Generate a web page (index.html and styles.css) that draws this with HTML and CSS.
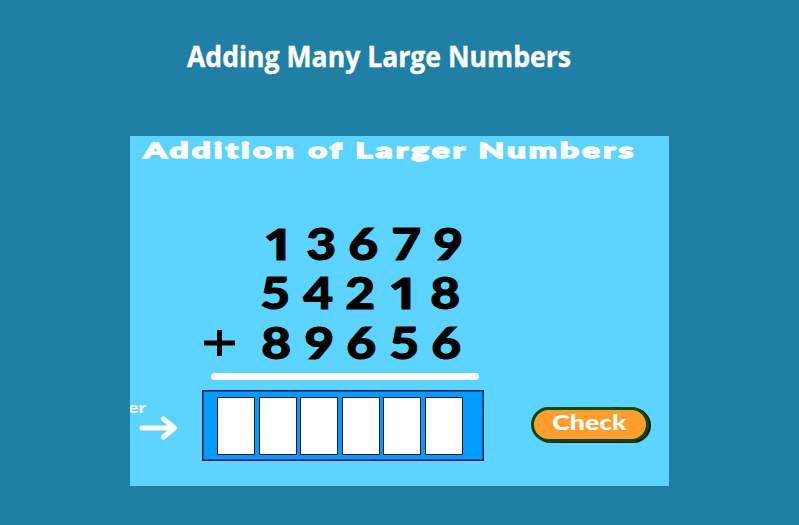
FILE: index.html
```
<!DOCTYPE html>
<html lang="en">
<head>
<meta charset="utf-8">
<title>Adding Many Large Numbers</title>
<link rel="stylesheet" href="styles.css">
</head>
<body>
<h1 class="heading"><svg width="799" height="136"><text x="187" y="67" textLength="384" lengthAdjust="spacingAndGlyphs">Adding Many Large Numbers</text></svg></h1>
<main class="panel">
  <h2 class="title"><svg width="539" height="34"><text transform="scale(1.55 1)" x="8.7" y="22.5" textLength="316" lengthAdjust="spacing">Addition of Larger Numbers</text></svg></h2>
  <section class="sum">
    <div class="row first"><b></b><b class="one">1</b><b>3</b><b>6</b><b>7</b><b>9</b></div>
    <div class="row second"><b></b><b>5</b><b>4</b><b>2</b><b class="one">1</b><b>8</b></div>
    <div class="row"><svg class="plus" width="32" height="28"><path d="M0 13H31M15.5 0V26"/></svg><b>8</b><b>9</b><b>6</b><b>5</b><b>6</b></div>
  </section>
  <div class="rule"></div>
  <div class="controls">
    <div class="hint"><span>er</span><svg width="40" height="26"><path d="M3 13H35M24.500 4L35.500 13L24.500 22"/></svg></div>
    <div class="answer"><i></i><i></i><i></i><i></i><i></i><i></i></div>
    <button class="check"><svg width="112" height="29"><text transform="scale(1.18 1)" x="15.5" y="19.500" textLength="63" lengthAdjust="spacingAndGlyphs">Check</text></svg></button>
  </div>
</main>
</body>
</html>
```
FILE: styles.css
```
* { box-sizing: border-box; }
body { margin: 0; width: 799px; height: 525px; overflow: hidden; background: #1f7fa5; font-family: Lato, "Liberation Sans", sans-serif; }
svg { display: block; }
.heading { margin: 0; height: 136px; font: bold 28px "Open Sans", "Noto Sans", sans-serif; }
.heading text { fill: #fff; stroke: #fff; stroke-width: .4px; }
.panel { width: 539px; height: 350px; margin-left: 130px; background: #5cd4ff; overflow: hidden; }
.title { margin: 0; height: 84px; font: 900 21.5px Lato, sans-serif; font-variant-ligatures: none; }
.title text { fill: #fff; stroke: #fff; stroke-width: 1.3px; }
.sum { height: 152px; padding-left: 74px; }
.row { display: grid; grid-template-columns: 51px repeat(5, 42.600px); height: 49.500px; align-items: center; }
.row b { height: 44px; font-weight: 900; font-size: 43px; line-height: 42px; text-align: center; transform: scaleX(1.200); -webkit-text-stroke: 1px #000; }
.row .one { font-family: "Open Sans", sans-serif; font-weight: 700; line-height: 42px; }
.first { padding-left: 2px; }
.second { margin-left: -1px; }
.second b { line-height: 41px; }
.plus path { fill: none; stroke: #000; stroke-width: 5px; }
.rule { width: 268px; height: 7px; margin: 1px 0 0 81px; border-radius: 4px; background: #fff; }
.controls { display: flex; padding-top: 10px; }
.hint { width: 72px; padding-top: 9px; color: #fff; font: 900 15px/16px Lato, sans-serif; }
.hint span { display: block; width: 18px; transform: scaleX(1.300); transform-origin: left; margin-left: -2px; }
.hint svg { margin-left: 9px; }
.hint path { fill: none; stroke: #fff; stroke-width: 5px; stroke-linecap: round; stroke-linejoin: round; }
.answer { display: flex; gap: 3.6px; width: 282px; height: 71px; padding: 5px 0 0 13px; border: 1.500px solid #10184c; background: #009dff; box-shadow: inset 0 0 0 .5px #10184c; }
.answer i { width: 38px; height: 58px; border: 1.500px solid #171230; background: #fff; margin: 1px -1px 0 1px; flex: none; }
.check { width: 118px; height: 35px; margin: 17px 0 0 47px; padding: 0; border: 3px solid #064b0b; border-radius: 18px; background: #ff9e2c; box-shadow: 2px 1px 0 #001c10; font: 900 20px Lato, sans-serif; }
.check text { fill: #fff; }
```
